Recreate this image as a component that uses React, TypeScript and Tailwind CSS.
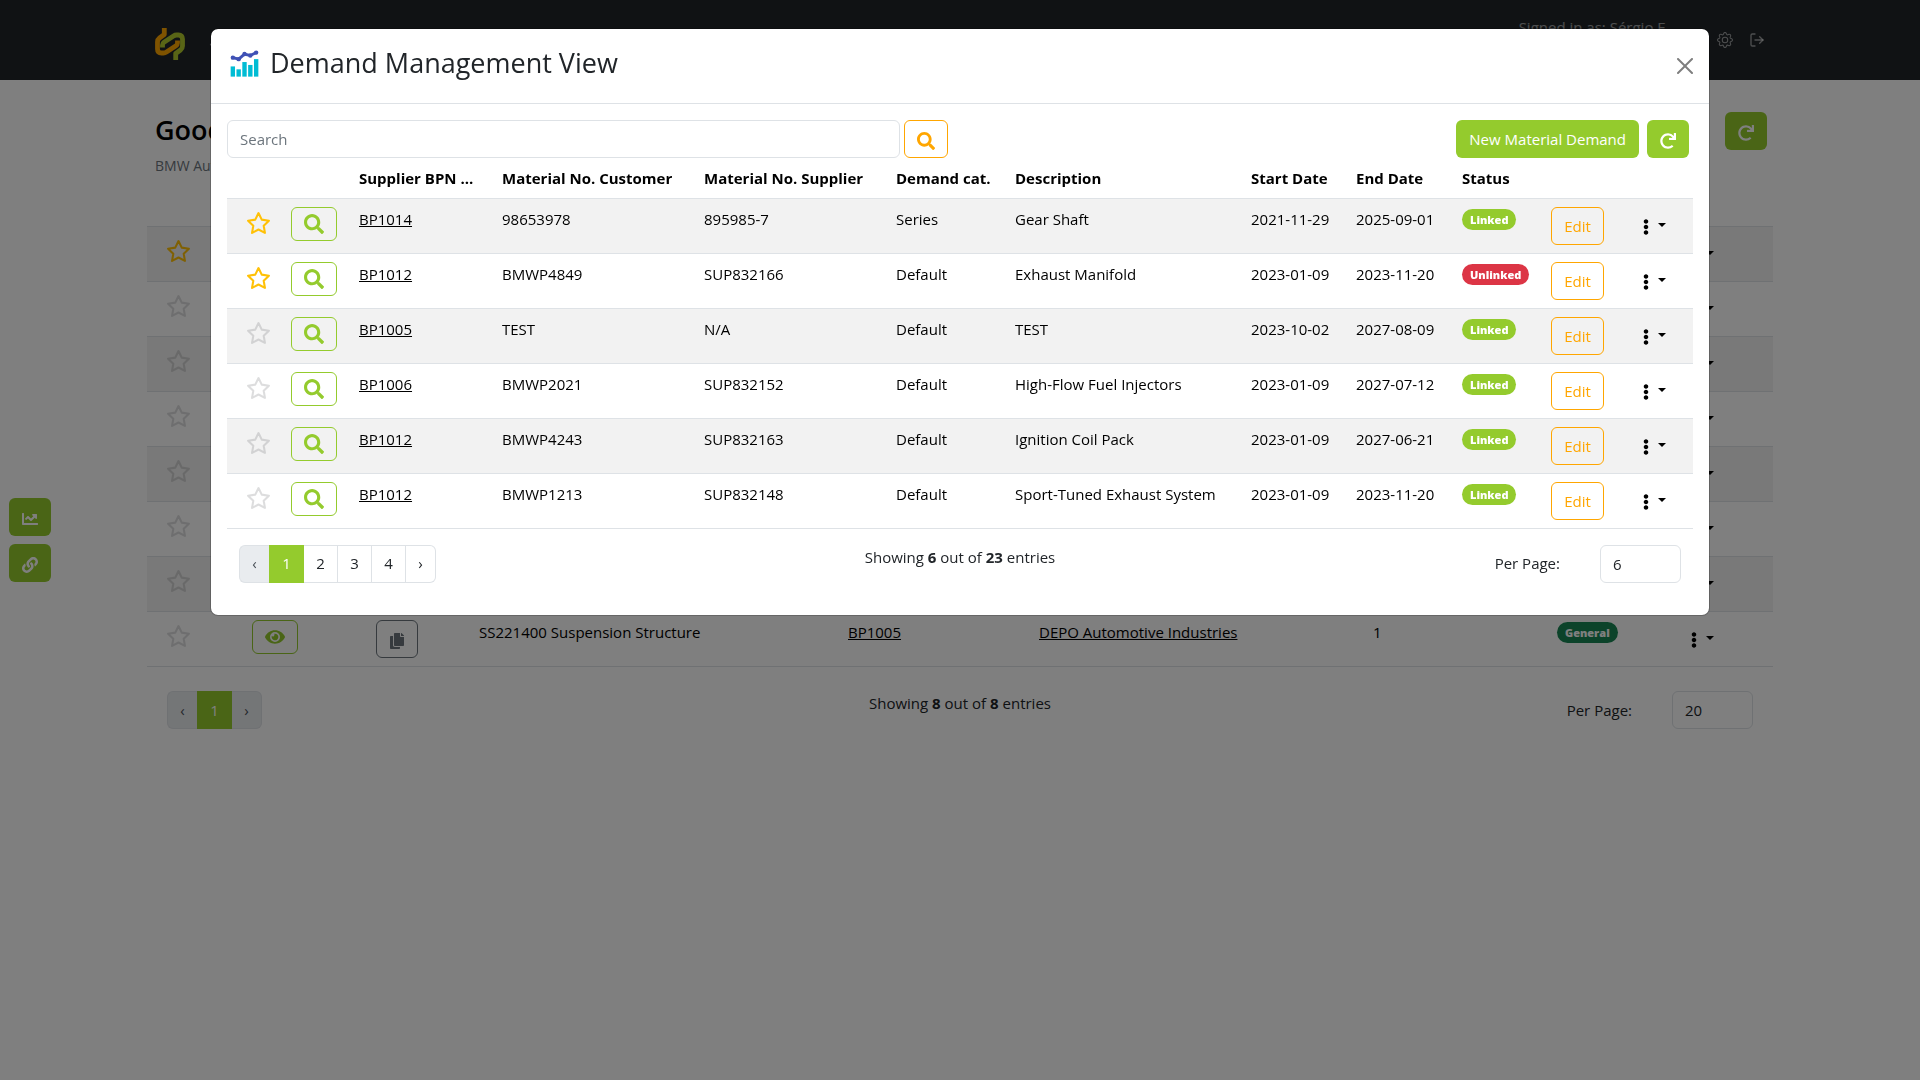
import React from "react";
import { FaSearch, FaEye, FaCopy, FaRedo, FaEllipsisV, FaChartLine, FaLink } from "react-icons/fa";
import { FcComboChart } from "react-icons/fc";
import { FiLogOut } from "react-icons/fi";
import { AiOutlineHome } from "react-icons/ai";
import { BsGear } from "react-icons/bs";

function Star({ on }: { on: boolean }) {
  return (
    <button aria-label="Toggle favorite" className="block">
      <svg
        viewBox="0 0 24 24"
        fill="none"
        stroke="currentColor"
        strokeWidth="2"
        strokeLinecap="round"
        strokeLinejoin="round"
        className={on ? "size-[25px] text-[#ffc107]" : "size-[25px] text-[#212529] opacity-15"}
      >
        <polygon points="12 2 15.09 8.26 22 9.27 17 14.14 18.18 21.02 12 17.77 5.82 21.02 7 14.14 2 9.27 8.91 8.26 12 2" />
      </svg>
    </button>
  );
}

function Kebab() {
  return (
    <button aria-label="More actions" className="flex items-center gap-1 text-black">
      <FaEllipsisV className="mt-1 size-4" />
      <svg viewBox="0 0 8 4" className="h-1 w-2" fill="currentColor">
        <path d="M0 0h8L4 4z" />
      </svg>
    </button>
  );
}

function Logo() {
  return (
    <svg viewBox="0 0 30 32" className="h-8 w-[30px]" fill="none" strokeWidth="4.8" strokeLinejoin="round">
      <path d="M9.300 0v6.500L4.500 10Q2.500 11.500 2.500 14v7q0 4 4 4h2q1.500 0 3-1l9.500-6.300q1.500-1 1.500-2.700v-2.500" stroke="#ffa600" />
      <path d="M20.700 32v-6.500L25.500 22Q27.500 20.500 27.500 18v-7q0-4-4-4h-2q-1.500 0-3 1L9 14.300q-1.500 1-1.500 2.700v2.500" stroke="#b3cb2d" />
    </svg>
  );
}

const pageLink = "flex h-[38px] items-center justify-center border border-[#dee2e6]";

function Pager({ pages, nextDisabled }: { pages: number; nextDisabled: boolean }) {
  return (
    <nav aria-label="Pages" className="flex">
      <button className={pageLink + " w-[30px] rounded-l-md border-r-0 bg-[#e9ecef] text-[#495057]"}>‹</button>
      {Array.from({ length: pages }, (_, i) => (
        <button
          key={i}
          className={
            i === 0
              ? "flex h-[38px] w-[35px] items-center justify-center bg-[#94cb2d] text-white"
              : pageLink + " w-[34px] border-l-0 bg-white"
          }
        >
          {i + 1}
        </button>
      ))}
      <button
        className={
          nextDisabled
            ? pageLink + " w-[30px] rounded-r-md border-l-0 bg-[#e9ecef] text-[#495057]"
            : pageLink + " w-[30px] rounded-r-md border-l-0 bg-white"
        }
      >
        ›
      </button>
    </nav>
  );
}

function TableFooter(props: { id: string; pages: number; nextDisabled: boolean; shown: number; total: number; perPage: string }) {
  return (
    <div className="grid grid-cols-3 items-start pr-3 pl-3">
      <Pager pages={props.pages} nextDisabled={props.nextDisabled} />
      <p className="text-center leading-6">
        Showing <b>{props.shown}</b> out of <b>{props.total}</b> entries
      </p>
      <div className="flex items-center justify-end gap-10">
        <label htmlFor={props.id}>Per Page:</label>
        <input
          id={props.id}
          defaultValue={props.perPage}
          className="h-[38px] w-[81px] rounded-md border border-[#dee2e6] bg-white px-3"
        />
      </div>
    </div>
  );
}

const cell = "px-2 pt-2 align-top leading-6 whitespace-nowrap";
const badge = "mt-0.5 block w-fit rounded-full px-2 text-[11px] leading-[21px] font-extrabold text-white";

const widths = ["w-[56px]", "w-[68px]", "w-[143px]", "w-[202px]", "w-[192px]", "w-[119px]", "w-[236px]", "w-[105px]", "w-[106px]", "w-[89px]", "w-[83px]", "w-[67px]"];
const heads = ["", "", "Supplier BPN ...", "Material No. Customer", "Material No. Supplier", "Demand cat.", "Description", "Start Date", "End Date", "Status", "", ""];

const demands = [
  { fav: true, bpn: "BP1014", cust: "98653978", sup: "895985-7", cat: "Series", desc: "Gear Shaft", start: "2021-11-29", end: "2025-09-01", linked: true },
  { fav: true, bpn: "BP1012", cust: "BMWP4849", sup: "SUP832166", cat: "Default", desc: "Exhaust Manifold", start: "2023-01-09", end: "2023-11-20", linked: false },
  { fav: false, bpn: "BP1005", cust: "TEST", sup: "N/A", cat: "Default", desc: "TEST", start: "2023-10-02", end: "2027-08-09", linked: true },
  { fav: false, bpn: "BP1006", cust: "BMWP2021", sup: "SUP832152", cat: "Default", desc: "High-Flow Fuel Injectors", start: "2023-01-09", end: "2027-07-12", linked: true },
  { fav: false, bpn: "BP1012", cust: "BMWP4243", sup: "SUP832163", cat: "Default", desc: "Ignition Coil Pack", start: "2023-01-09", end: "2027-06-21", linked: true },
  { fav: false, bpn: "BP1012", cust: "BMWP1213", sup: "SUP832148", cat: "Default", desc: "Sport-Tuned Exhaust System", start: "2023-01-09", end: "2023-11-20", linked: true },
];

function DemandTable() {
  return (
    <table className="w-full table-fixed border-collapse text-black">
      <colgroup>
        {widths.map((w, i) => (
          <col key={i} className={w} />
        ))}
      </colgroup>
      <thead>
        <tr className="h-10 border-b border-[#dee2e6]">
          {heads.map((h, i) => (
            <th key={i} className={cell + " text-left font-bold"}>{h}</th>
          ))}
        </tr>
      </thead>
      <tbody>
        {demands.map((d, i) => (
          <tr key={i} className="h-[55px] border-b border-[#dee2e6] odd:bg-[#f2f2f2]">
            <td className="pt-3 pl-[19px] align-top"><Star on={d.fav} /></td>
            <td className={cell}>
              <button aria-label="View demand" className="flex h-[34px] w-[46px] items-center justify-center rounded-md border border-[#94cb2d] text-[#94cb2d]">
                <FaSearch className="size-5" />
              </button>
            </td>
            <td className={cell}><a href="#" className="underline">{d.bpn}</a></td>
            <td className={cell}>{d.cust}</td>
            <td className={cell}>{d.sup}</td>
            <td className={cell}>{d.cat}</td>
            <td className={cell}>{d.desc}</td>
            <td className={cell}>{d.start}</td>
            <td className={cell}>{d.end}</td>
            <td className={cell}>
              <span className={badge + (d.linked ? " bg-[#94cb2d]" : " bg-[#dc3545]")}>
                {d.linked ? "Linked" : "Unlinked"}
              </span>
            </td>
            <td className={cell}>
              <button className="block h-[38px] w-[53px] rounded-md border border-[#ffa600] text-[#ffa600]">Edit</button>
            </td>
            <td className="pt-4 pl-3 align-top"><Kebab /></td>
          </tr>
        ))}
      </tbody>
    </table>
  );
}

const groupWidths = ["w-[97px]", "w-[124px]", "w-[103px]", "w-[369px]", "w-[191px]", "w-[334px]", "w-[184px]", "w-[133px]", "w-[91px]"];
const groups = [true, false, false, false, false, false, false, false];

function GroupTable() {
  return (
    <table className="w-full table-fixed border-collapse text-black">
      <colgroup>
        {groupWidths.map((w, i) => (
          <col key={i} className={w} />
        ))}
      </colgroup>
      <tbody>
        {groups.map((fav, i) => (
          <tr key={i} className="h-[55px] border-b border-[#dee2e6] first:border-t odd:bg-[#f2f2f2]">
            <td className="pt-3 pl-[19px] align-top"><Star on={fav} /></td>
            <td className={cell}>
              <button aria-label="View group" className="flex h-[34px] w-[46px] items-center justify-center rounded-md border border-[#94cb2d] text-[#94cb2d]">
                <FaEye className="size-5" />
              </button>
            </td>
            <td className={cell}>
              <button aria-label="Copy group id" className="flex h-[38px] w-[42px] items-center justify-center rounded-md border border-[#6c757d] text-[#6c757d]">
                <FaCopy className="mt-1 size-4" />
              </button>
            </td>
            <td className={cell}>SS221400 Suspension Structure</td>
            <td className={cell}><a href="#" className="underline">BP1005</a></td>
            <td className={cell}><a href="#" className="underline">DEPO Automotive Industries</a></td>
            <td className={cell}>1</td>
            <td className={cell}>
              <span className={badge + " bg-[#198754]"}>General</span>
            </td>
            <td className="pt-4 pl-1 align-top"><Kebab /></td>
          </tr>
        ))}
      </tbody>
    </table>
  );
}

const greenButton = "flex h-[38px] items-center justify-center rounded-md bg-[#94cb2d] text-white";

export default function App() {
  return (
    <div className="min-h-screen bg-white font-['Open_Sans',sans-serif] text-[15px] text-[#212529]">
      <header className="h-20 bg-[#212529]">
        <div className="flex h-20 items-center justify-between px-[155px] text-white/55">
          <div className="flex items-center gap-6 pt-2">
            <Logo />
            <AiOutlineHome className="size-4" />
          </div>
          <div className="flex items-start gap-4">
            <span className="mr-8 -mt-4">Signed in as: Sérgio F.</span>
            <BsGear className="size-4" />
            <FiLogOut className="size-4" />
          </div>
        </div>
      </header>
      <main className="px-[147px]">
        <div className="flex items-start justify-between pt-8 pr-1.5 pl-2">
          <div>
            <h1 className="text-[27px] leading-9 font-semibold text-black">Good Afternoon</h1>
            <p className="mt-2 text-sm leading-5 text-[#6c757d]">BMW Automotive</p>
          </div>
          <button aria-label="Refresh groups" className={greenButton + " w-[42px]"}><FaRedo className="mt-1 size-4" /></button>
        </div>
        <div className="mt-[50px]"><GroupTable /></div>
        <div className="mt-6 px-2"><TableFooter id="groups-per-page" pages={1} nextDisabled shown={8} total={8} perPage="20" /></div>
      </main>
      <aside className="fixed top-[498px] left-[9px] flex flex-col gap-2">
        <button aria-label="Charts" className={greenButton + " w-[42px]"}><FaChartLine className="mt-1 size-4" /></button>
        <button aria-label="Links" className={greenButton + " w-[42px]"}><FaLink className="mt-1 size-4" /></button>
      </aside>
      <div className="fixed inset-0 bg-black/50 pt-7">
        <section role="dialog" aria-labelledby="dialog-title" className="mx-auto max-w-[1500px] rounded-lg border border-black/20 bg-white bg-clip-padding">
          <div className="flex h-[75px] items-center justify-between border-b border-[#dee2e6] px-4">
            <h2 id="dialog-title" className="flex items-center gap-2 pb-1.5 text-[27px] font-medium">
              <FcComboChart className="size-[35px]" />
              Demand Management View
            </h2>
            <button aria-label="Close" className="text-black opacity-50">
              <svg viewBox="0 0 16 16" className="size-4" fill="currentColor">
                <path d="M.293.293a1 1 0 0 1 1.414 0L8 6.586 14.293.293a1 1 0 1 1 1.414 1.414L9.414 8l6.293 6.293a1 1 0 0 1-1.414 1.414L8 9.414l-6.293 6.293a1 1 0 0 1-1.414-1.414L6.586 8 .293 1.707a1 1 0 0 1 0-1.414z" />
              </svg>
            </button>
          </div>
          <div className="px-4 pt-4 pb-8">
            <div className="flex items-center justify-between pr-1">
              <form className="flex w-[721px] gap-1">
                <input aria-label="Search" placeholder="Search" className="h-[38px] min-w-0 flex-1 rounded-md border border-[#dee2e6] px-3 placeholder:text-[#6c757d]" />
                <button type="button" aria-label="Run search" className="flex h-[38px] w-11 items-center justify-center rounded-md border border-[#ffa600] text-[#ffa600]">
                  <FaSearch className="mt-1 size-[18px]" />
                </button>
              </form>
              <div className="flex gap-2">
                <button className={greenButton + " px-[13px]"}>New Material Demand</button>
                <button aria-label="Refresh demands" className={greenButton + " w-[42px]"}><FaRedo className="mt-1 size-4" /></button>
              </div>
            </div>
            <DemandTable />
            <div className="mt-4"><TableFooter id="demands-per-page" pages={4} nextDisabled={false} shown={6} total={23} perPage="6" /></div>
          </div>
        </section>
      </div>
    </div>
  );
}
